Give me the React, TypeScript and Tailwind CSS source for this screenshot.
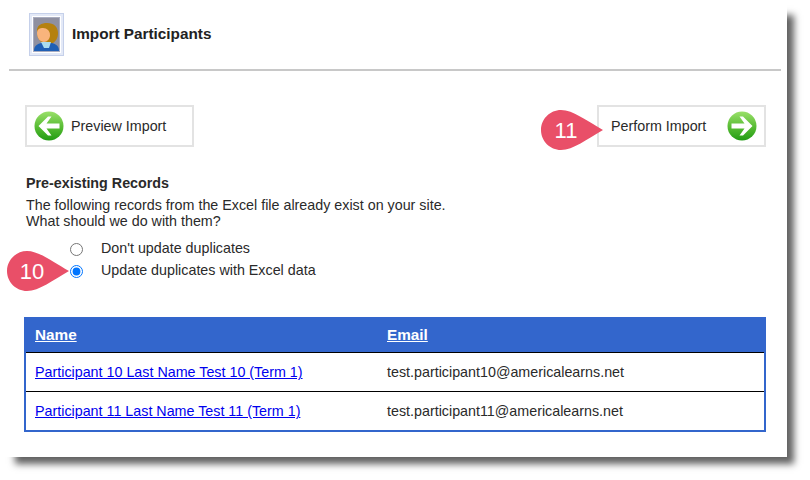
import React from "react";

function Arrow({ dir }: { dir: "left" | "right" }) {
  const id = "g" + dir;
  return (
    <svg width="30" height="30" viewBox="0 0 30 30" className="shrink-0">
      <defs>
        <linearGradient id={id} x1="0" y1="0" x2="0" y2="1">
          <stop offset="0" stopColor="#9ae06a" />
          <stop offset="0.55" stopColor="#56bb32" />
          <stop offset="1" stopColor="#229c14" />
        </linearGradient>
      </defs>
      <circle cx="15" cy="15" r="14.5" fill={`url(#${id})`} />
      <g transform={dir === "left" ? "" : "translate(30,0) scale(-1,1)"}>
        <path d="M4.5 15 L14 5.5 L17.5 5.5 L12.5 12.5 L25.5 12.5 L25.5 17.5 L12.5 17.5 L17.5 24.5 L14 24.5 Z" fill="#ffffff" />
      </g>
    </svg>
  );
}

function Person() {
  return (
    <svg width="35" height="43" viewBox="0 0 35 43" className="shrink-0">
      <rect x="0.5" y="0.5" width="34" height="42" fill="#e3e9f7" stroke="#c5d0ea" />
      <rect x="3" y="3" width="29" height="37" fill="#ffffff" />
      <rect x="4.5" y="4.5" width="26" height="34" fill="#8f90a0" stroke="#a8acc0" />
      <path d="M8 19 C7 12 13 10 18 10 C25 10 29 14 29 20 C29 25 27 28 24 30 L14 30 C10 28 8 24 8 19 Z" fill="#b5810f" />
      <path d="M8 20 C8 16 11 15 14 15 C18 15 21 18 21 22 C21 26 18 29 15 29 C11 29 8 25 8 20 Z" fill="#f9b47c" />
      <path d="M5 38 C5 33 8 31 12 30 L23 30 C27 31 30 33 30 38 Z" fill="#1f5fb5" />
      <path d="M12 29 L22 29 L20 35 L15 35 Z" fill="#a9dcef" />
    </svg>
  );
}

function Badge({ label, className }: { label: string; className: string }) {
  return (
    <div className={`absolute w-[68px] h-[40px] ${className}`}>
      <svg width="68" height="40" viewBox="0 0 68 40" className="absolute inset-0">
        <path d="M20 0 C32 0 46 11 62 20 C46 29 32 40 20 40 C9 40 0 31 0 20 C0 9 9 0 20 0 Z" fill="#e94f68" />
      </svg>
      <span className="absolute left-0 top-0 w-[50px] h-[40px] flex items-center justify-center text-white text-[22px]">{label}</span>
    </div>
  );
}

export default function App() {
  return (
    <div className="w-[810px] h-[480px] bg-white overflow-hidden font-['Liberation_Sans',Arial,sans-serif] text-[14.3px] text-[#2a2a2a]">
      <div className="relative w-[787px] h-[457px] bg-white shadow-[11px_11px_7px_-4px_rgba(0,0,0,0.62)]">
        <header className="h-[71px] ml-[9px] w-[772px] border-b-2 border-[#c8c8c8] pl-5 pt-[13px] flex items-start gap-2">
          <Person />
          <h1 className="font-bold text-[15.3px] leading-[16px] mt-[13px] text-[#222]">Import Participants</h1>
        </header>

        <div className="mx-[25px] mt-[34px] w-[741px] flex justify-between">
          <div className="w-[169px] h-[42px] border-2 border-[#e3e3e3] flex items-center pl-[7px] gap-[7px]">
            <Arrow dir="left" />
            <span className="pt-[2px]">Preview Import</span>
          </div>
          <div className="w-[169px] h-[42px] border-2 border-[#e3e3e3] flex items-center justify-between pl-[12px] pr-[7px]">
            <span className="pt-[2px]">Perform Import</span>
            <Arrow dir="right" />
          </div>
        </div>

        <section className="ml-[26px] mt-[28px]">
          <h2 className="font-bold leading-[16px]">Pre-existing Records</h2>
          <p className="mt-[6px] leading-[16px]">
            The following records from the Excel file already exist on your site.
            <br />
            What should we do with them?
          </p>
          <div className="mt-[12px] ml-[44px] flex flex-col gap-[6px]">
            <label className="flex items-center h-[16px] gap-[18px]">
              <input type="radio" name="dup" className="w-[13px] h-[13px] m-0" />
              <span>Don't update duplicates</span>
            </label>
            <label className="flex items-center h-[16px] gap-[18px]">
              <input type="radio" name="dup" defaultChecked className="w-[13px] h-[13px] m-0" />
              <span>Update duplicates with Excel data</span>
            </label>
          </div>
        </section>

        <div className="ml-[24px] mt-[38px] w-[742px] border-2 border-[#3366cc] border-t-0">
          <div className="h-[35px] -mx-[2px] bg-[#3366cc] grid grid-cols-[352px_1fr] items-center pl-[11px] pt-[1px] font-bold text-[15.3px] text-white underline">
            <span>Name</span>
            <span>Email</span>
          </div>
          <div className="h-[39px] border-t border-black grid grid-cols-[352px_1fr] items-center pl-[9px] pt-[2px]">
            <a href="#" className="text-[#0000ee] underline">Participant 10 Last Name Test 10 (Term 1)</a>
            <span>test.participant10@americalearns.net</span>
          </div>
          <div className="h-[39px] border-t border-black grid grid-cols-[352px_1fr] items-center pl-[9px] pt-[2px]">
            <a href="#" className="text-[#0000ee] underline">Participant 11 Last Name Test 11 (Term 1)</a>
            <span>test.participant11@americalearns.net</span>
          </div>
        </div>

        <Badge label="11" className="left-[541px] top-[110px]" />
        <Badge label="10" className="left-[7px] top-[251px]" />
      </div>
    </div>
  );
}
